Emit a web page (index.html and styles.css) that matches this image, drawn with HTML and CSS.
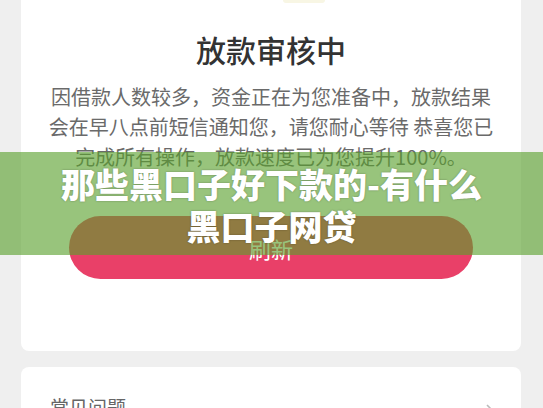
FILE: index.html
```html
<!DOCTYPE html>
<html lang="zh-CN">
<head>
  <meta charset="UTF-8" />
  <title>放款审核中</title>
  <meta name="viewport" content="width=device-width, initial-scale=1.0" />
  <link rel="stylesheet" href="styles.css">
</head>
<body>

<div class="page">
  <!-- 审核状态 -->
  <div class="card status">
    <div class="status-icon"></div>
    <h2 class="status-title">放款审核中</h2>
    <p class="status-text">因借款人数较多，资金正在为您准备中，放款结果会在早八点前短信通知您，请您耐心等待 恭喜您已完成所有操作，放款速度已为您提升100%。</p>
    <button class="refresh-btn" type="button">刷新</button>
  </div>

  <!-- 常见问题 -->
  <div class="card faq">
    <span class="faq-title">常见问题</span>
    <svg class="faq-arrow" width="10" height="16" viewBox="0 0 10 16">
      <polyline points="2,2 8,8 2,14" fill="none" stroke="#bbb" stroke-width="1.6" />
    </svg>
  </div>
</div>

<!-- 标题横幅 -->
<div class="banner">
  <div class="banner-text">那些黑口子好下款的-有什么黑口子网贷</div>
</div>

</body>
</html>
```

FILE: styles.css
```css
body {
  background: #efefef;
  font-family: "Noto Sans CJK SC", "Noto Sans", sans-serif;
  margin: 0;
  padding: 0;
}

.page {
  padding: 0 22px 0 21px;
}

.card {
  background: white;
  border-radius: 8px;
}

.status {
  padding: 0 24px 72px;
  border-radius: 0 0 8px 8px;
}

.status-icon {
  width: 42px;
  height: 3px;
  margin-left: 238px;
  background: #f8f6e4;
  border-radius: 0 0 20px 20px;
}

.status-title {
  margin: 26px 0 0;
  font-size: 30px;
  line-height: 40px;
  font-weight: 500;
  text-align: center;
  color: #333;
}

.status-text {
  margin: 13px 0 0;
  font-size: 20px;
  line-height: 30px;
  text-align: center;
  color: #6a6a6a;
}

.refresh-btn {
  display: block;
  width: 404px;
  height: 63px;
  margin: 44px auto 0;
  border: none;
  border-radius: 32px;
  background-color: #e94068;
  color: white;
  font-family: inherit;
  font-size: 22px;
  cursor: pointer;
}

.faq {
  margin-top: 16px;
  padding: 28px 26px 28px 29px;
  display: flex;
  align-items: center;
  justify-content: space-between;
}

.faq-title {
  font-size: 19px;
  line-height: 24px;
  color: #666;
}

.faq-arrow {
  margin-top: 8px;
}

.banner {
  position: absolute;
  top: 152px;
  left: 0;
  right: 0;
  height: 103px;
  background: rgba(89, 160, 44, 0.62);
  display: flex;
  justify-content: center;
  align-items: center;
}

.banner-text {
  width: 440px;
  margin-top: 2px;
  font-size: 34px;
  line-height: 42px;
  font-weight: 900;
  text-align: center;
  color: white;
  text-shadow: 0 0 2px rgba(0, 0, 0, 0.35);
}
```
